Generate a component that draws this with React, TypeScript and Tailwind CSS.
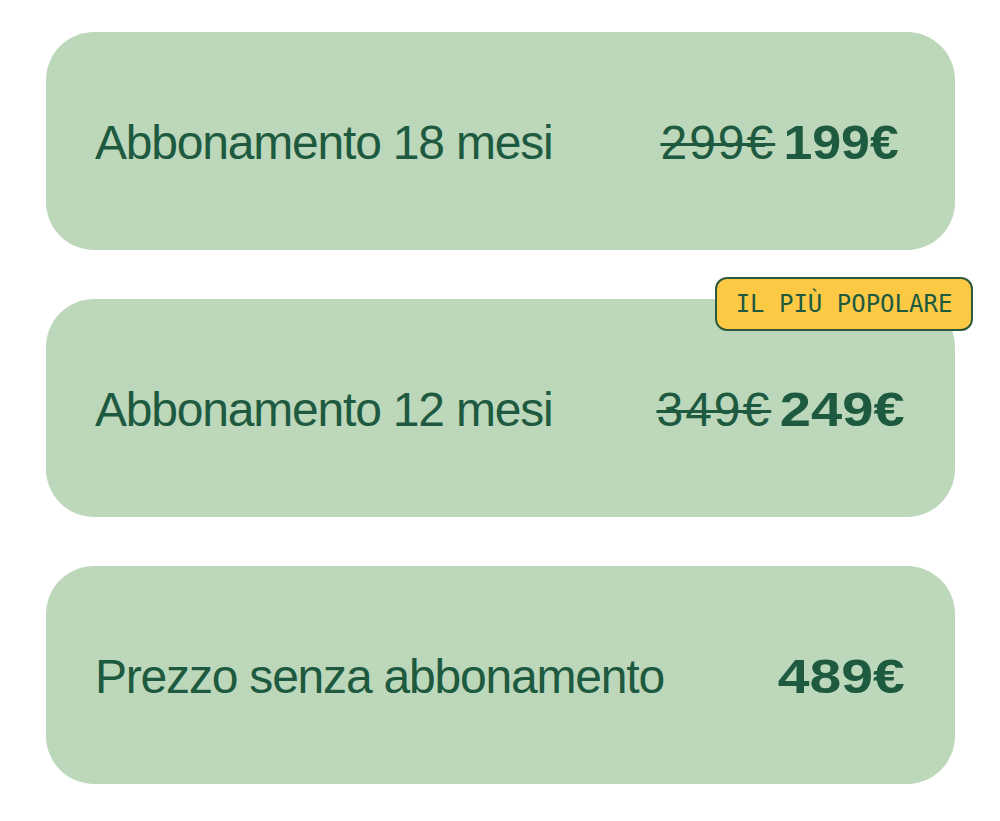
import React from "react";

type Plan = { label: string; old?: string; price: string; badge?: boolean; priceCls: string };

const plans: Plan[] = [
  { label: "Abbonamento 18 mesi", old: "299€", price: "199€", priceCls: "scale-x-[1.08] ml-[17px] mr-[6px]" },
  { label: "Abbonamento 12 mesi", old: "349€", price: "249€", badge: true, priceCls: "scale-x-[1.17] ml-[27px]" },
  { label: "Prezzo senza abbonamento", price: "489€", priceCls: "scale-x-[1.19]" },
];

export default function App() {
  return (
    <div className="min-h-[821px] w-[1000px] bg-white px-[46px] pt-[32px] [font-family:'Liberation_Sans',Arial,sans-serif]">
      <div className="flex w-[909px] flex-col gap-[49px]">
        {plans.map((p) => (
          <div
            key={p.label}
            className="relative flex h-[218px] items-center justify-between rounded-[48px] bg-[#bcd7ba] pl-[49px] pr-[50px] text-[#1d5a40]"
          >
            <span className="pt-[4px] text-[48px] font-normal leading-none tracking-[-1.2px]">{p.label}</span>
            <span className="flex items-baseline pt-[4px] leading-none">
              {p.old && (
                <span className="text-[48px] font-normal tracking-[2px] line-through decoration-[2.5px]">{p.old}</span>
              )}
              <span className={`inline-block origin-right text-[48px] font-bold ${p.priceCls}`}>{p.price}</span>
            </span>
            {p.badge && (
              <div className="absolute right-[-18px] top-[-22px] flex h-[54px] w-[258px] items-center justify-center rounded-[12px] border-2 border-[#2d5a3c] bg-[#fcc945] text-[24px] text-[#1d5a40] [font-family:'DejaVu_Sans_Mono',monospace]">
                IL PIÙ POPOLARE
              </div>
            )}
          </div>
        ))}
      </div>
    </div>
  );
}
